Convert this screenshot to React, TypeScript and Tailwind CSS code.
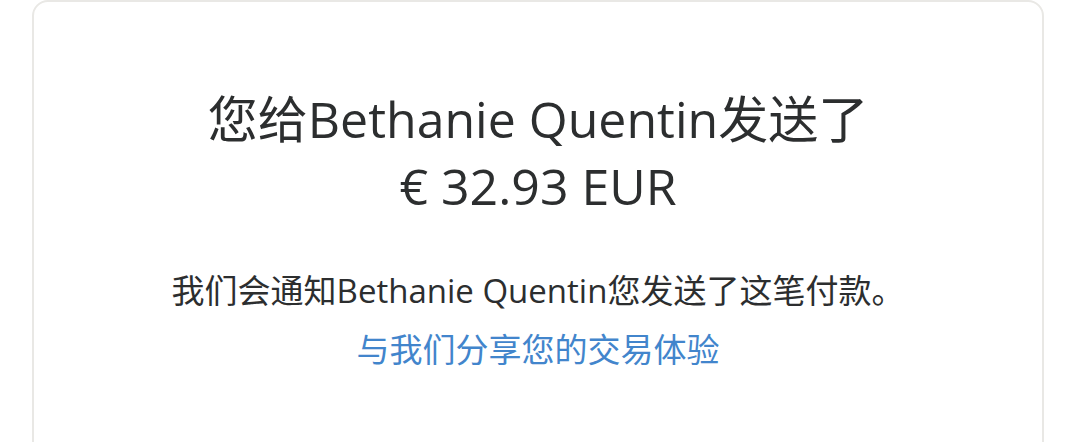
export default function App() {
  return (
    <div className="h-[442px] w-[1080px] overflow-hidden bg-white pl-8">
      <div
        className="flex h-[480px] w-[1012px] flex-col items-center rounded-[16px] border-2 border-[#e9e8e5] bg-white pt-[84px] text-center"
        style={{ fontFamily: "'Open Sans', 'Noto Sans CJK SC', sans-serif" }}
      >
        <h1 className="text-[50px] leading-[67px] font-normal text-[#2c2e2f]">
          您给Bethanie Quentin发送了
          <br />
          € 32.93 EUR
        </h1>
        <p className="mt-[49px] text-[33px] leading-[44px] text-[#2c2e2f]">
          我们会通知Bethanie Quentin您发送了这笔付款。
        </p>
        <a href="#" className="mt-[15px] text-[33px] leading-[44px] text-[#4285cc]">
          与我们分享您的交易体验
        </a>
      </div>
    </div>
  );
}
